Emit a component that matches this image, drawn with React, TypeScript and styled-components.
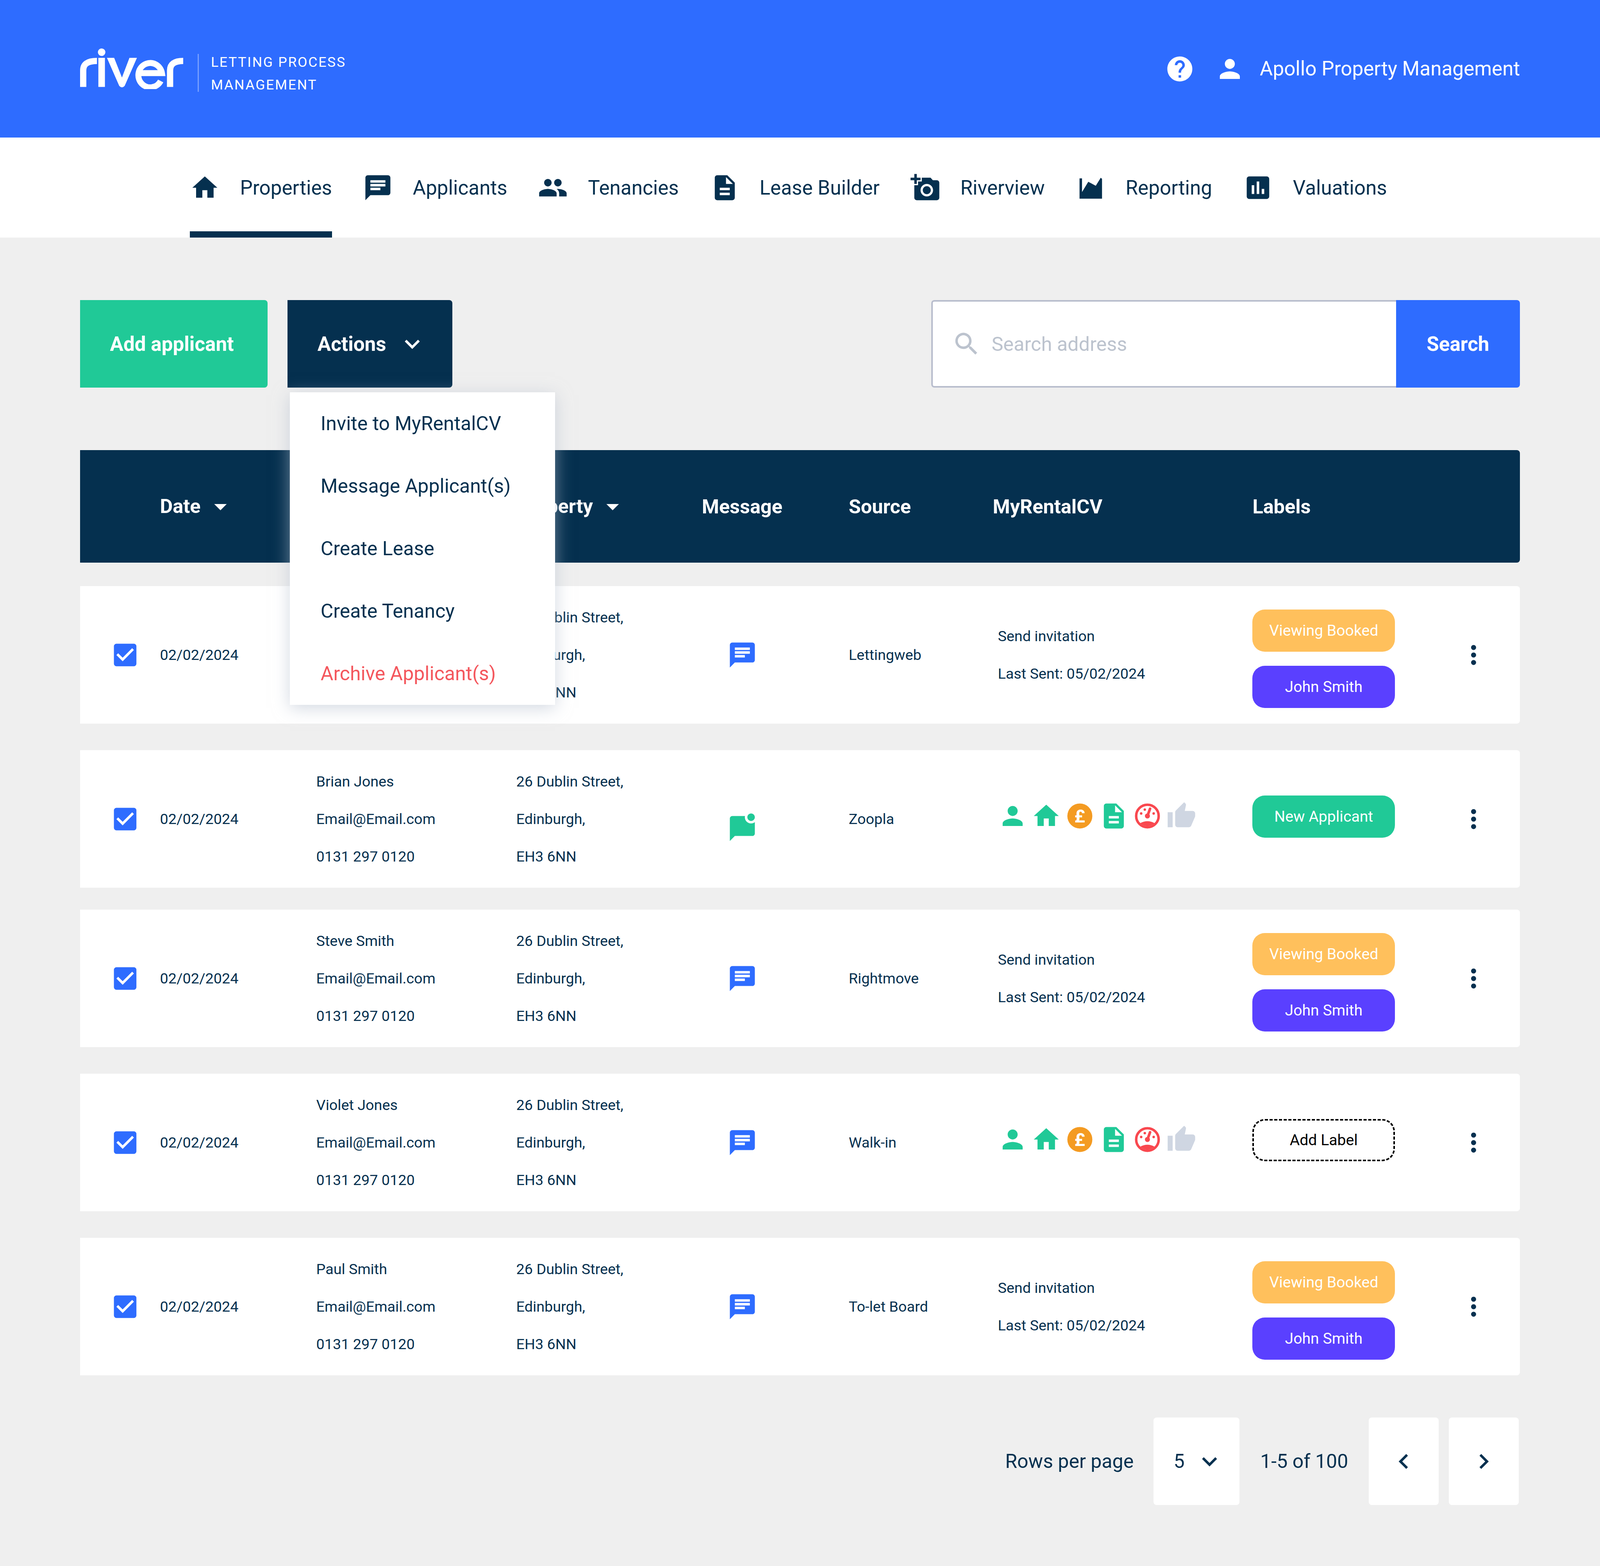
import React from 'react'
import styled, { createGlobalStyle } from 'styled-components'
import {
  MdAddAPhoto,
  MdArrowDropDown,
  MdChat,
  MdCheckBox,
  MdChevronLeft,
  MdChevronRight,
  MdDescription,
  MdHelp,
  MdHome,
  MdInsertChart,
  MdKeyboardArrowDown,
  MdMarkChatUnread,
  MdMoreVert,
  MdPeople,
  MdPerson,
  MdSearch,
  MdThumbUp,
} from 'react-icons/md'

const navy = '#05304f'
const blue = '#2e6cff'
const green = '#20c997'
const red = '#f9484f'

// design is 5120 wide, widths and fonts follow the window
const vw = (n: number) => `${n / 51.2}vw`
const iconSize = vw(96)

const GlobalStyle = createGlobalStyle`
  html, body {
    margin: 0;
    padding: 0;
    background: #efefef;
  }
  body {
    font-family: Roboto, "Liberation Sans", sans-serif;
    color: ${navy};
  }
  * {
    box-sizing: border-box;
  }
`

const Page = styled.div`
  width: 100vw;
  height: 4008px;
  overflow: hidden;
`

const TopBar = styled.header`
  height: 352px;
  background: ${blue};
  color: #fff;
  display: flex;
  align-items: center;
  justify-content: space-between;
  padding: 0 ${vw(256)};
`

const Brand = styled.div`
  display: flex;
  align-items: center;
`

const LogoSvg = styled.svg`
  width: ${vw(332)};
  height: auto;
`

const BrandDivider = styled.div`
  width: ${vw(4)};
  height: 97px;
  margin: 20px ${vw(39)} 0 ${vw(44)};
  background: rgba(255, 255, 255, 0.35);
`

const Tagline = styled.div`
  margin-top: 24px;
  font-size: ${vw(44.5)};
  line-height: 58px;
  letter-spacing: ${vw(3.4)};
`

const UserArea = styled.div`
  display: flex;
  align-items: center;
  gap: ${vw(64)};
  font-size: ${vw(64)};
`

const UserName = styled.div`
  display: flex;
  align-items: center;
  gap: ${vw(48)};
`

const Nav = styled.nav`
  height: 256px;
  background: #fff;
  display: flex;
  gap: ${vw(98.5)};
  padding-left: ${vw(608)};
`

const NavItem = styled.div<{ $active?: boolean }>`
  display: flex;
  align-items: center;
  gap: ${vw(64)};
  font-size: ${vw(64)};
  border-bottom: 16px solid ${(p) => (p.$active ? navy : 'transparent')};
  padding-top: 16px;
`

const Main = styled.main`
  padding: 160px ${vw(256)} 0;
`

const Toolbar = styled.div`
  display: flex;
  justify-content: space-between;
  height: 224px;
`

const ToolbarLeft = styled.div`
  display: flex;
  gap: ${vw(64)};
`

const ActionsWrap = styled.div`
  position: relative;
`

const Button = styled.div<{ $bg: string }>`
  height: 224px;
  display: flex;
  align-items: center;
  background: ${(p) => p.$bg};
  color: #fff;
  font-size: ${vw(64)};
  font-weight: 700;
  border-radius: 0 8px 8px 0;
`

const AddButton = styled(Button)`
  width: ${vw(600)};
  padding-left: ${vw(96)};
`

const ActionsButton = styled(Button)`
  width: ${vw(527)};
  padding-left: ${vw(96)};
  gap: ${vw(35)};
`

const SearchGroup = styled.div`
  display: flex;
  height: 224px;
`

const SearchField = styled.div`
  width: ${vw(1487)};
  display: flex;
  align-items: center;
  gap: ${vw(32)};
  padding-left: ${vw(60)};
  background: #fff;
  border: 4px solid #b8bdcd;
  border-right: 0;
  border-radius: 8px 0 0 8px;
  font-size: ${vw(63)};
  color: #bcc3ce;
`

const SearchButton = styled(Button)`
  width: ${vw(397)};
  justify-content: center;
`

const Menu = styled.div`
  position: absolute;
  top: 236px;
  left: ${vw(8)};
  z-index: 5;
  width: ${vw(848)};
  background: #fff;
  box-shadow: 0 8px 40px rgba(180, 190, 205, 0.6);
`

const MenuItem = styled.div<{ $danger?: boolean }>`
  height: 160px;
  display: flex;
  align-items: center;
  padding-left: ${vw(98)};
  font-size: ${vw(62.5)};
  color: ${(p) => (p.$danger ? '#f4575d' : navy)};
`

const columns = [160, 500, 640, 594, 470, 461, 831, 456, 300].map(vw).join(' ')

const TableHead = styled.div`
  margin-top: 160px;
  height: 288px;
  padding: 0 ${vw(100)} 0 ${vw(96)};
  display: grid;
  grid-template-columns: ${columns};
  align-items: center;
  background: ${navy};
  color: #fff;
  border-radius: 0 8px 8px 0;
  font-size: ${vw(63)};
  font-weight: 700;
`

const HeadCell = styled.div<{ $col: number }>`
  grid-column: ${(p) => p.$col};
  display: flex;
  align-items: center;
`

const Caret = styled.span`
  display: flex;
  margin-left: ${vw(15)};
`

const Rows = styled.div`
  padding-top: 60px;
`

const Row = styled.div<{ $gap: number }>`
  margin-top: ${(p) => p.$gap}px;
  height: 352px;
  padding: 0 ${vw(100)} 0 ${vw(96)};
  display: grid;
  grid-template-columns: ${columns};
  align-items: center;
  background: #fff;
  border-radius: 0 8px 8px 0;
  font-size: ${vw(47.2)};
`

const Check = styled.div`
  display: flex;
  color: ${blue};
`

const Lines = styled.div`
  line-height: 96px;
`

const MessageCell = styled.div<{ $unread?: boolean }>`
  display: flex;
  padding-left: ${vw(82)};
  margin-top: ${(p) => (p.$unread ? 48 : 0)}px;
  color: ${(p) => (p.$unread ? green : blue)};
`

const InviteCell = styled(Lines)`
  padding-left: ${vw(16)};
`

const StatusIcons = styled.div`
  display: flex;
  gap: ${vw(12)};
  padding-left: ${vw(15)};
  margin-bottom: 16px;
  color: ${green};
`

const Labels = styled.div<{ $top: number }>`
  align-self: start;
  padding-top: ${(p) => p.$top}px;
  display: flex;
  flex-direction: column;
  gap: 36px;
  font-size: ${vw(49)};
`

const Pill = styled.div<{ $bg?: string }>`
  height: 108px;
  display: flex;
  align-items: center;
  justify-content: center;
  border-radius: 32px;
  background: ${(p) => p.$bg};
  color: #fff;
`

const AddLabel = styled(Pill)`
  background: transparent;
  border: 4px dashed #000;
  color: #000;
`

const More = styled.div`
  justify-self: end;
  display: flex;
`

const Pagination = styled.div`
  margin-top: 108px;
  padding-right: ${vw(4)};
  display: flex;
  justify-content: flex-end;
  align-items: center;
  height: 224px;
  font-size: ${vw(62.5)};
`

const PageSelect = styled.div`
  height: 224px;
  margin: 0 ${vw(66)} 0 ${vw(64)};
  padding: 0 ${vw(48)} 0 ${vw(64)};
  display: flex;
  align-items: center;
  gap: ${vw(32)};
  background: #fff;
  border-radius: 8px;
`

const PageButton = styled.div`
  width: ${vw(224)};
  height: 224px;
  display: flex;
  align-items: center;
  justify-content: center;
  background: #fff;
  border-radius: 8px;
`

const PageButtons = styled.div`
  display: flex;
  gap: ${vw(32)};
  margin-left: ${vw(66)};
`

const RiverLogo = () => (
  <LogoSvg viewBox="0 0 332 130">
    <g fill="none" stroke="#fff" strokeWidth="20">
      <path d="M10 123V70C10 50 24 40 54 40" />
      <path d="M69 30V123" strokeWidth="21" />
      <path d="M288 123V70C288 50 302 40 330 40" />
      <path d="M186 79H262A38 39 0 1 0 258 104" strokeWidth="19" />
    </g>
    <ellipse cx="69" cy="12" rx="12" ry="12" fill="#fff" />
    <path d="M86 30H109L134 93L158 30H182L143 119Q134 130 125 119Z" fill="#fff" />
  </LogoSvg>
)

const ReportingIcon = () => (
  <svg width={iconSize} height={iconSize} viewBox="0 0 24 24" fill="currentColor">
    <path d="M3 4.5H5V15.5L10 7.25L16 10.5L20 4L21 5V20.75H3Z" />
  </svg>
)

const PoundIcon = () => (
  <svg width={iconSize} height={iconSize} viewBox="0 0 24 24">
    <circle cx="12" cy="12" r="10" fill="#f49b22" />
    <text
      x="12"
      y="17.3"
      textAnchor="middle"
      fontFamily="Roboto, sans-serif"
      fontWeight="700"
      fontSize="14.5"
      fill="#fff"
    >
      £
    </text>
  </svg>
)

const GaugeIcon = () => (
  <svg width={iconSize} height={iconSize} viewBox="0 0 24 24">
    <circle cx="12" cy="12" r="9" fill="#fff" stroke={red} strokeWidth="2" />
    <path d="M6.3 17.7Q12 14.6 17.7 17.7A8 8 0 0 1 6.3 17.7Z" fill={red} />
    <path d="M12 12L14.1 6.25" stroke={red} strokeWidth="2.1" strokeLinecap="round" />
    <circle cx="12" cy="12" r="2" fill={red} />
    <circle cx="9.9" cy="6.9" r="1" fill={red} />
    <circle cx="7" cy="10" r="1" fill={red} />
    <circle cx="17" cy="10" r="1" fill={red} />
  </svg>
)

const navItems = [
  { label: 'Properties', icon: <MdHome size={iconSize} /> },
  { label: 'Applicants', icon: <MdChat size={iconSize} /> },
  { label: 'Tenancies', icon: <MdPeople size={iconSize} /> },
  { label: 'Lease Builder', icon: <MdDescription size={iconSize} /> },
  { label: 'Riverview', icon: <MdAddAPhoto size={iconSize} /> },
  { label: 'Reporting', icon: <ReportingIcon /> },
  { label: 'Valuations', icon: <MdInsertChart size={iconSize} /> },
]

const menuItems = [
  'Invite to MyRentalCV',
  'Message Applicant(s)',
  'Create Lease',
  'Create Tenancy',
]

// first row has no name: the open menu lies over that cell
const rows = [
  { gap: 0, name: '', source: 'Lettingweb', invited: true },
  { gap: 68, name: 'Brian Jones', source: 'Zoopla', invited: false, unread: true, label: 'new' },
  { gap: 56, name: 'Steve Smith', source: 'Rightmove', invited: true },
  { gap: 68, name: 'Violet Jones', source: 'Walk-in', invited: false, label: 'add' },
  { gap: 68, name: 'Paul Smith', source: 'To-let Board', invited: true },
]

const App = () => {
  return (
    <Page>
      <GlobalStyle />
      <TopBar>
        <Brand>
          <RiverLogo />
          <BrandDivider />
          <Tagline>
            LETTING PROCESS
            <br />
            MANAGEMENT
          </Tagline>
        </Brand>
        <UserArea>
          <MdHelp size={iconSize} />
          <UserName>
            <MdPerson size={iconSize} />
            Apollo Property Management
          </UserName>
        </UserArea>
      </TopBar>

      <Nav>
        {navItems.map((item, i) => (
          <NavItem key={item.label} $active={i === 0}>
            {item.icon}
            {item.label}
          </NavItem>
        ))}
      </Nav>

      <Main>
        <Toolbar>
          <ToolbarLeft>
            <AddButton $bg={green}>Add applicant</AddButton>
            <ActionsWrap>
              <ActionsButton $bg={navy}>
                Actions
                <MdKeyboardArrowDown size={iconSize} />
              </ActionsButton>
              <Menu>
                {menuItems.map((item) => (
                  <MenuItem key={item}>{item}</MenuItem>
                ))}
                <MenuItem $danger>Archive Applicant(s)</MenuItem>
              </Menu>
            </ActionsWrap>
          </ToolbarLeft>
          <SearchGroup>
            <SearchField>
              <MdSearch size={iconSize} />
              Search address
            </SearchField>
            <SearchButton $bg={blue}>Search</SearchButton>
          </SearchGroup>
        </Toolbar>

        <TableHead>
          <HeadCell $col={2}>
            Date
            <Caret>
              <MdArrowDropDown size={iconSize} />
            </Caret>
          </HeadCell>
          <HeadCell $col={4}>
            Property
            <Caret>
              <MdArrowDropDown size={iconSize} />
            </Caret>
          </HeadCell>
          <HeadCell $col={5}>Message</HeadCell>
          <HeadCell $col={6}>Source</HeadCell>
          <HeadCell $col={7}>MyRentalCV</HeadCell>
          <HeadCell $col={8}>Labels</HeadCell>
        </TableHead>

        <Rows>
          {rows.map((row) => (
            <Row key={row.source} $gap={row.gap}>
              <Check>
                <MdCheckBox size={iconSize} />
              </Check>
              <div>02/02/2024</div>
              <Lines>
                {row.name && (
                  <>
                    {row.name}
                    <br />
                    Email@Email.com
                    <br />
                    0131 297 0120
                  </>
                )}
              </Lines>
              <Lines>
                26 Dublin Street,
                <br />
                Edinburgh,
                <br />
                EH3 6NN
              </Lines>
              <MessageCell $unread={row.unread}>
                {row.unread ? <MdMarkChatUnread size={iconSize} /> : <MdChat size={iconSize} />}
              </MessageCell>
              <div>{row.source}</div>
              {row.invited ? (
                <InviteCell>
                  Send invitation
                  <br />
                  Last Sent: 05/02/2024
                </InviteCell>
              ) : (
                <StatusIcons>
                  <MdPerson size={iconSize} />
                  <MdHome size={iconSize} />
                  <PoundIcon />
                  <MdDescription size={iconSize} />
                  <GaugeIcon />
                  <MdThumbUp size={iconSize} color="#cfd6e2" />
                </StatusIcons>
              )}
              <Labels $top={row.invited ? 60 : 116}>
                {row.invited && <Pill $bg="#ffc05c">Viewing Booked</Pill>}
                {row.invited && <Pill $bg="#5a40ff">John Smith</Pill>}
                {row.label === 'new' && <Pill $bg={green}>New Applicant</Pill>}
                {row.label === 'add' && <AddLabel>Add Label</AddLabel>}
              </Labels>
              <More>
                <MdMoreVert size={iconSize} />
              </More>
            </Row>
          ))}
        </Rows>

        <Pagination>
          Rows per page
          <PageSelect>
            5
            <MdKeyboardArrowDown size={iconSize} />
          </PageSelect>
          1-5 of 100
          <PageButtons>
            <PageButton>
              <MdChevronLeft size={iconSize} />
            </PageButton>
            <PageButton>
              <MdChevronRight size={iconSize} />
            </PageButton>
          </PageButtons>
        </Pagination>
      </Main>
    </Page>
  )
}

export default App
